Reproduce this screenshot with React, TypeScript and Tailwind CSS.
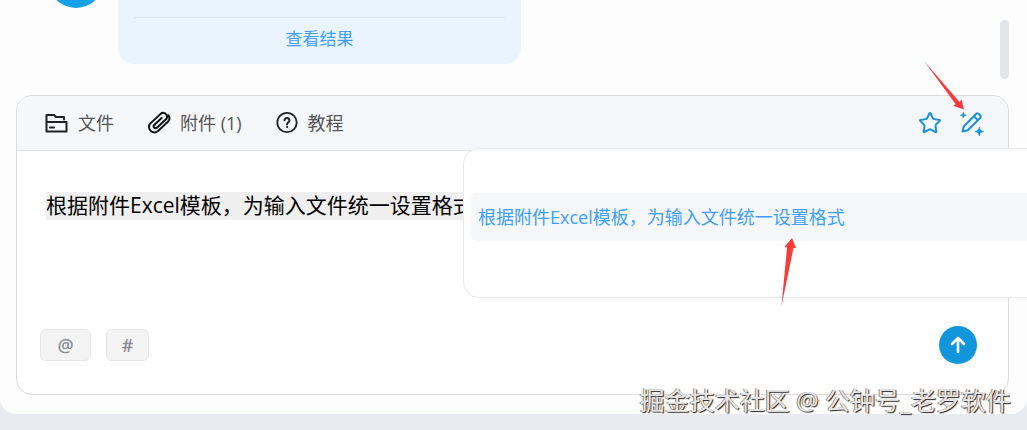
import { useState } from 'react';
import { Star } from 'lucide-react';

function FolderIcon() {
  return (
    <svg viewBox="0 0 24 24" className="h-6 w-6" fill="none" stroke="#222" strokeWidth="2" strokeLinejoin="round" strokeLinecap="round">
      <path d="M19 8.500V6h-8L9 4H1.500v16.500h20V11H3" />
      <path d="M5 16.500h4" />
    </svg>
  );
}

function ClipIcon() {
  return (
    <svg viewBox="0 0 24 24" className="h-6 w-6" fill="none" stroke="#111" strokeWidth="2" strokeLinecap="round">
      <g transform="translate(12 11.500) rotate(-43)">
        <path d="M5 5.500H-6.500A5.300 5.300 0 0 1 -6.500 -5.200H8A4 4 0 0 1 8 2.400H-5.500A2 2 0 0 1 -5.500 -1.500H5" />
        <path d="M5 5.500H7A5 5 0 0 0 11.800 1" />
      </g>
    </svg>
  );
}

function HelpIcon() {
  return (
    <svg viewBox="0 0 24 24" className="h-6 w-6" fill="none" stroke="#222" strokeWidth="1.800" strokeLinecap="round">
      <circle cx="12" cy="11.500" r="9.700" />
      <path d="M9.500 9.300a2.500 2.300 0 1 1 4.200 1.700c-.9.7-1.700 1.100-1.700 2.400" strokeWidth="2" />
      <circle cx="12" cy="16" r=".6" fill="#222" strokeWidth="1" />
    </svg>
  );
}

function MagicPenIcon() {
  return (
    <svg viewBox="0 0 26 26" className="h-[26px] w-[26px]" fill="none" stroke="#1b92d6" strokeWidth="2" strokeLinejoin="round">
      <path d="M3.500 21.500l1.300-5L17.300 3.700a1.500 1.500 0 0 1 2.100 0l2 2a1.500 1.500 0 0 1 0 2.100L8.800 20.300z" />
      <path d="M15 6.300l3.900 3.900" />
      <path d="M4.300 2.200l.8 2.200 2.200.8-2.200.8-.8 2.200-.8-2.200-2.200-.8 2.200-.8z" fill="#1b92d6" strokeWidth=".6" />
      <path d="M20.300 17.200l1.200 3.100 3.100 1.200-3.100 1.200-1.200 3.100-1.200-3.100-3.100-1.200 3.100-1.200z" fill="#1b92d6" strokeWidth=".6" />
    </svg>
  );
}

function Arrows() {
  return (
    <>
      <svg viewBox="0 0 42 50" className="pointer-events-none absolute top-[60px] right-[62px] h-[50px] w-[42px]" fill="#f83b3b">
        <path d="M1 1L36.500 42 38.500 39.500 41 49.500 30.500 46 32.500 44z" />
      </svg>
      <svg viewBox="0 0 18 70" className="pointer-events-none absolute top-[237px] left-[780px] h-[70px] w-[18px]" fill="#f83b3b">
        <path d="M1.500 69L7 10.500 4.500 10 12 1 16 11 13.500 11z" />
      </svg>
    </>
  );
}

function Message() {
  return (
    <div className="flex h-28 shrink-0 gap-[14px]">
      <div className="h-14 w-14 rounded-full bg-[#14a1e8]" />
      <div className="flex w-[403px] flex-col justify-end rounded-2xl bg-[#eaf4ff] px-4">
        <div className="flex h-[47px] justify-center border-t border-[#dbe6f3] pt-[7px]">
          <a href="#result" className="h-7 text-[17px] leading-7 text-[#409eff]">查看结果</a>
        </div>
      </div>
    </div>
  );
}

function Toolbar() {
  return (
    <div className="flex h-[55px] items-center justify-between rounded-t-2xl border-b border-[#dfe1e6] bg-[#f5f7fb] pr-[23px] pl-7 text-lg text-[#555]">
      <div className="flex items-center gap-[33px]">
        <button className="flex items-center gap-[9px]"><FolderIcon />文件</button>
        <button className="flex items-center gap-[9px]"><ClipIcon />附件 (1)</button>
        <button className="flex items-center gap-[9px]"><HelpIcon />教程</button>
      </div>
      <div className="flex items-center gap-[17px]">
        <button aria-label="收藏"><Star className="h-6 w-6 text-[#1b92d6]" strokeWidth={2} /></button>
        <button aria-label="提示词"><MagicPenIcon /></button>
      </div>
    </div>
  );
}

function App() {
  const prompt = '根据附件Excel模板，为输入文件统一设置格式';
  const [text, setText] = useState(prompt);

  return (
    <div className="relative min-h-screen overflow-hidden bg-[#e8ecf1] font-['Open_Sans','Noto_Sans_CJK_SC',sans-serif]">
      <div className="rounded-b-2xl bg-[#fdfdfe] pb-[19px]">
        <div className="flex h-[95px] justify-between pr-[18px] pl-12">
          <div className="flex flex-col justify-end overflow-hidden pb-[31px]">
            <Message />
          </div>
          <div className="mt-5 h-[59px] w-[9px] rounded-full bg-[#e3e6e9]" />
        </div>

        <div className="relative mr-[18px] ml-4 rounded-2xl border border-[#d9dbe0] bg-white">
          <Toolbar />
          <div className="px-[29px] pt-[41px]">
            <input
              aria-label="输入"
              value={text}
              onChange={(e) => setText(e.target.value)}
              className="block h-7 w-1/2 bg-[#efefef] text-[21px] text-black outline-none"
            />
          </div>
          <div className="mt-[106px] mb-[30px] flex items-center justify-between pr-[31px] pl-[23px]">
            <div className="flex gap-[15px] text-lg font-semibold text-[#8c8e94]">
              <button className="flex h-8 w-[51px] items-center justify-center rounded-md border border-[#e6e7e9] bg-[#f4f4f5]">@</button>
              <button className="flex h-8 w-[43px] items-center justify-center rounded-md border border-[#e6e7e9] bg-[#f4f4f5]">#</button>
            </div>
            <button aria-label="发送" className="flex h-[38px] w-[38px] items-center justify-center rounded-full bg-[#1296db]">
              <svg viewBox="0 0 20 20" className="h-5 w-5" fill="none" stroke="#fff" strokeWidth="2.600" strokeLinecap="round" strokeLinejoin="round">
                <path d="M10 17V3.500M4 9l6-6 6 6" />
              </svg>
            </button>
          </div>

          <div className="absolute top-[52px] left-[446px] h-[150px] w-[640px] rounded-2xl border border-[#e8e9ed] bg-white px-[7px] pt-[44px]">
            <button
              onClick={() => setText(prompt)}
              className="flex h-12 w-full items-center rounded-md bg-[#f5f7fb] px-[7px] text-lg text-[#409eff]"
            >
              {prompt}
            </button>
          </div>
        </div>
      </div>

      <Arrows />
      <div className="absolute right-4 bottom-[10px] text-[25px] leading-10 whitespace-nowrap text-[#e6e6e6] [text-shadow:-1px_0_0_#888,1px_1px_1px_#222]">
        掘金技术社区 @ 公钟号_老罗软件
      </div>
    </div>
  );
}

export default App;
